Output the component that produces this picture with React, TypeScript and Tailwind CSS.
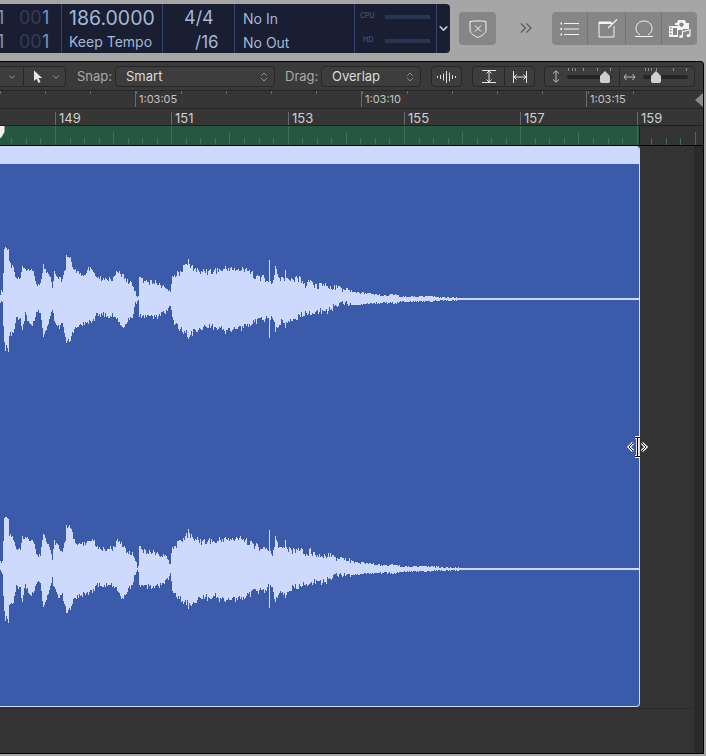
import { ChevronDown, ChevronsUpDown } from 'lucide-react';

const ui = "font-['Inter','Liberation_Sans',sans-serif]";

// waveform envelope: [x, px above centre, px below centre]
const envelope: number[][] = [
  [0, 7, 4], [2, 8, 5], [3, 26, 26], [4, 50, 44], [8, 50, 53], [9, 36, 36], [13, 31, 34], [16, 21, 19], [20, 22, 21],
  [22, 34, 34], [25, 31, 16], [30, 31, 28], [33, 27, 24], [37, 14, 13], [40, 14, 14], [43, 35, 38], [46, 27, 31],
  [50, 21, 16], [52, 11, 11], [54, 27, 20], [58, 22, 29], [62, 18, 26], [65, 30, 38], [66, 44, 43], [70, 42, 41],
  [73, 32, 32], [76, 27, 29], [85, 25, 25], [87, 30, 24], [92, 31, 23], [96, 24, 17], [100, 21, 16], [107, 21, 17],
  [112, 21, 17], [118, 29, 22], [122, 24, 30], [128, 17, 20], [132, 16, 17], [135, 7, 5], [138, 2, 2], [139, 22, 18],
  [145, 17, 18], [155, 17, 19], [160, 14, 16], [166, 12, 13], [170, 6, 6], [172, 22, 21], [176, 25, 28], [182, 31, 33],
  [188, 37, 37], [192, 33, 36], [200, 29, 31], [215, 29, 29], [225, 32, 33], [240, 31, 31], [250, 28, 26], [255, 24, 24],
  [265, 22, 22], [272, 16, 18], [275, 31, 33], [280, 22, 24], [285, 22, 26], [290, 19, 21], [300, 22, 19], [305, 14, 16],
  [310, 20, 16], [315, 14, 14], [325, 16, 14], [335, 12, 9], [345, 11, 6], [355, 7, 6], [370, 6, 5], [385, 4, 4],
  [395, 5, 5], [400, 3, 3], [415, 3, 3], [430, 3, 3], [440, 2, 2], [450, 2, 2], [459, 2, 2],
];

const spikes: Record<number, number> = { 269: 39, 66: 44, 188: 40, 5: 52, 275: 33, 285: 29 };

function lerp(x: number, col: number) {
  for (let i = 0; i < envelope.length - 1; i++) {
    const a = envelope[i];
    const b = envelope[i + 1];
    if (x >= a[0] && x <= b[0]) return a[col] + ((b[col] - a[col]) * (x - a[0])) / (b[0] - a[0] || 1);
  }
  return 1;
}

function wavePath(seed: number) {
  let d = '';
  for (let x = 0; x < 460; x++) {
    const r1 = Math.abs(Math.sin((x + seed) * 12.9898) * 43758.5453) % 1;
    const r2 = Math.abs(Math.sin((x + seed) * 78.233) * 12543.123) % 1;
    const k = x > 350 ? 2 : x > 175 ? 7 : 5;
    const up = spikes[x] ?? lerp(x, 1) - r1 * k + (x > 350 ? 0.5 : 2);
    const down = spikes[x] ?? lerp(x, 2) - r2 * k + (x > 350 ? 0.5 : 2);
    d += `M${x + 0.5} ${(70 - Math.max(up, 1)).toFixed(0)}V${(70 + Math.max(down, 1)).toFixed(0)}`;
  }
  return d;
}

const Waveform = ({ seed }: { seed: number }) => (
  <svg width="639" height="140" className="block" shapeRendering="crispEdges">
    <path d={wavePath(seed)} stroke="#cdd9fd" strokeWidth="1" fill="none" />
    <rect x="459" y="69" width="180" height="2" fill="#cdd9fd" />
  </svg>
);

const Counter = () => (
  <div className="flex h-[22px] items-center whitespace-nowrap">
    <span className="-ml-[3px] w-[22px] text-[#7f94b3]">1</span>
    <span className="w-[23px] text-[#343c54]">00</span>
    <span className="text-[#7f94b3]">1</span>
  </div>
);

const Lcd = () => (
  <div className={`flex h-[49px] w-[450px] rounded-r-[4px] bg-[#191e33] text-[#a4b8d4] ${ui}`}>
    <div className="flex h-full w-[62px] flex-col gap-[2px] overflow-hidden border-r border-[#33456e] pt-[2px] text-[18px]">
      <Counter />
      <Counter />
    </div>
    <div className="flex w-[101px] flex-col items-start border-r border-[#33456e] pl-[7px]">
      <div className="h-[27px] pt-[1px] text-[19.5px] leading-[26px]">186.0000</div>
      <div className="pt-[1px] text-[14px] leading-[20px]">Keep Tempo</div>
    </div>
    <div className="relative w-[72px] border-r border-[#33456e] text-[18px]">
      <div className="pl-[21px] leading-[28px]">4/4</div>
      <div className="pl-[32px] text-[17px] leading-[20px]">/16</div>
    </div>
    <div className="flex w-[120px] flex-col border-r border-[#33456e] pl-[8px] pt-[3px] text-[14px]">
      <div className="leading-[23px]">No In</div>
      <div className="leading-[25px]">No Out</div>
    </div>
    <div className="flex w-[82px] flex-col gap-[15px] border-r border-[#33456e] pl-[5px] pt-[8px] text-[7px] text-[#4d6390]">
      <div className="flex h-[9px] items-center gap-[7px]"><span className="w-[18px]">CPU</span><span className="h-[4px] w-[45px] bg-[#2a3553]" /></div>
      <div className="flex h-[9px] items-center gap-[7px]"><span className="w-[18px] pl-[3px]">HD</span><span className="h-[4px] w-[45px] bg-[#2a3553]" /></div>
    </div>
    <div className="flex flex-1 items-center justify-center">
      <ChevronDown size={13} strokeWidth={3} className="text-[#b8c6dc]" />
    </div>
  </div>
);

const TopBar = () => (
  <div className="flex h-[61px] items-start bg-[#a6a6a6] pt-[4px]">
    <Lcd />
    <div className="ml-[9px] mt-[8px] flex h-[33px] w-[37px] items-center justify-center rounded-[4px] bg-[#868686]">
      <svg width="18" height="18" viewBox="0 0 18 18" fill="none" stroke="#f2f2f2" strokeWidth="1">
        <path d="M1 1.5C6 0.7 12 0.7 17 1.5V10C17 13.5 12.5 16 9 17.5C5.5 16 1 13.5 1 10Z" />
        <path d="M6 5.5L12 11.5M12 5.5L6 11.5" />
      </svg>
    </div>
    <svg width="12" height="10" viewBox="0 0 12 10" fill="none" stroke="#555" strokeWidth="1.1" className="ml-[24px] mt-[19px]">
      <path d="M1 0.5L5.5 5L1 9.5M6.5 0.5L11 5L6.5 9.5" />
    </svg>
    <div className="ml-[20px] mt-[8px] flex h-[33px] w-[145px] divide-x divide-[#757575] rounded-[4px] bg-[#868686]">
      <div className="flex flex-1 items-center justify-center">
        <svg width="20" height="16" viewBox="0 0 20 16" fill="none" stroke="#f4f4f4" strokeWidth="1">
          <path d="M4 2.5H19M4 8H19M4 13.5H19" />
          <path d="M0.5 2.5H2M0.5 8H2M0.5 13.5H2" strokeWidth="2" />
        </svg>
      </div>
      <div className="flex flex-1 items-center justify-center pl-[2px]">
        <svg width="20" height="19" viewBox="0 0 20 19" fill="none" stroke="#f4f4f4" strokeWidth="1">
          <path d="M16 7V18H1V3H13" />
          <path d="M1 3H14V5H1Z" fill="#f4f4f4" strokeWidth="0" />
          <path d="M10 9L19 0.5" strokeWidth="1.3" />
        </svg>
      </div>
      <div className="flex flex-1 items-center justify-center">
        <svg width="20" height="18" viewBox="0 0 20 18" fill="none" stroke="#f4f4f4" strokeWidth="1">
          <path d="M6 15C3 13 2 10.5 2 8.5C2 4 5.5 1 10 1C14.5 1 18 4 18 8.5C18 10.5 17 13 14 15" />
          <path d="M1 16.5H19" />
        </svg>
      </div>
      <div className="flex flex-1 items-center justify-center">
        <svg width="22" height="21" viewBox="0 0 22 21" fill="#f4f4f4">
          <path fillRule="evenodd" d="M6 5H8L9 2H16L17 5H20V11H14V12H9V7H6ZM12.5 4.5A2.2 2.2 0 1 0 12.51 4.5Z" />
          <path fillRule="evenodd" d="M0 8H9V19H0ZM1 9V10.5H2.5V9ZM1 12V13.5H2.5V12ZM1 15V16.5H2.5V15ZM4 10V17H8V10Z" />
          <path fill="none" stroke="#f4f4f4" strokeWidth="1.2" d="M13.5 18V13.5L21 12V17" />
          <ellipse cx="12" cy="18.5" rx="2" ry="1.5" />
          <ellipse cx="19.5" cy="17.5" rx="2" ry="1.5" />
        </svg>
      </div>
    </div>
  </div>
);

const Field = ({ label, width }: { label: string; width: string }) => (
  <div className={`flex h-[21px] items-center justify-between rounded-[4px] border border-[#272727] bg-[#3d3d3d] pl-[10px] pr-[4px] text-[13px] text-[#dcdcdc] ${width}`}>
    {label}
    <ChevronsUpDown size={12} strokeWidth={1.2} className="text-[#c4c4c4]" />
  </div>
);

const Slider = ({ thumb, ticks }: { thumb: string; ticks: string }) => (
  <div className="relative ml-[7px] flex h-[12px] w-[45px] items-center rounded-full">
    <svg width="45" height="3" className="absolute -top-[3px] left-0" stroke="#8c8c8c" strokeWidth="1">
      <path d={ticks} />
    </svg>
    <div className="absolute inset-x-0 top-[4px] h-[4px] rounded-full bg-[#252525]" />
    <svg width="10" height="12" viewBox="0 0 10 12" fill="#cfcfcf" className={`relative ${thumb}`}>
      <path d="M5 0L10 5V10.5L9 12H1L0 10.5V5Z" />
    </svg>
  </div>
);

const Toolbar = () => (
  <div className={`flex h-[29px] items-center border-b border-[#262626] bg-[#3a3a3a] pt-[1px] text-[13px] text-[#a9a9a9] ${ui}`}>
    <div className="-ml-[2px] flex h-[21px] w-[68px] divide-x divide-[#272727] rounded-[4px] border border-[#272727] bg-[#3d3d3d]">
      <div className="flex w-[25px] items-center justify-end pr-[6px]">
        <ChevronDown size={10} className="text-[#a5a5a5]" />
      </div>
      <div className="flex flex-1 items-center justify-between pl-[9px] pr-[4px]">
        <svg width="10" height="14" viewBox="0 0 10 14" fill="#e6e6e6">
          <path d="M1 0.5V11L3.5 8.8L5.5 13L7.5 12L5.6 8H9.2Z" />
        </svg>
        <ChevronDown size={10} className="text-[#a5a5a5]" />
      </div>
    </div>
    <span className="ml-[11px] w-[38px]">Snap:</span>
    <Field label="Smart" width="w-[160px]" />
    <span className="ml-[10px] w-[36px]">Drag:</span>
    <Field label="Overlap" width="w-[100px]" />
    <div className="ml-[10px] flex h-[21px] w-[31px] items-center justify-center rounded-[4px] border border-[#272727] bg-[#3d3d3d]">
      <svg width="22" height="12" viewBox="0 0 22 12" stroke="#dcdcdc" strokeWidth="1">
        <path d="M1.5 5V7M4.5 4V8M7.5 2.5V9.5M10.5 0V12M13.5 1.5V10.5M16.5 4V8M19.5 5V7" />
      </svg>
    </div>
    <div className="ml-[10px] flex h-[21px] w-[63px] divide-x divide-[#272727] rounded-[4px] border border-[#272727] bg-[#3d3d3d]">
      <div className="flex w-[32px] items-center justify-center">
        <svg width="14" height="13" viewBox="0 0 14 13" fill="none" stroke="#e2e2e2" strokeWidth="1">
          <path d="M0 0.5H14M0 12.5H14M7 1V12M4.5 3.5L7 1L9.5 3.5M4.5 9.5L7 12L9.5 9.5" />
        </svg>
      </div>
      <div className="flex flex-1 items-center justify-center">
        <svg width="14" height="12" viewBox="0 0 14 12" fill="none" stroke="#e2e2e2" strokeWidth="1">
          <path d="M0.5 0V12M13.5 0V12M1 6H13M3.5 3.5L1 6L3.5 8.5M10.5 3.5L13 6L10.5 8.5" />
        </svg>
      </div>
    </div>
    <div className="ml-[9px] flex h-[21px] w-[151px] divide-x divide-[#272727] rounded-[4px] border border-[#272727] bg-[#3d3d3d]">
      <div className="flex w-[75px] items-center pl-[7px]">
        <svg width="8" height="13" viewBox="0 0 8 13" fill="none" stroke="#bdbdbd" strokeWidth="1">
          <path d="M4 1V12M1 3.5L4 0.8L7 3.5M1 9.5L4 12.2L7 9.5" />
        </svg>
        <Slider thumb="ml-[33px]" ticks="M1.5 0V3M5.5 0V3M8.5 0V3M16.5 0V3M30.5 0V3M43.5 0V3" />
      </div>
      <div className="flex flex-1 items-center pl-[3px]">
        <svg width="13" height="8" viewBox="0 0 13 8" fill="none" stroke="#bdbdbd" strokeWidth="1">
          <path d="M1 4H12M3.5 1L1 4L3.5 7M9.5 1L12 4L9.5 7" />
        </svg>
        <Slider thumb="ml-[8px]" ticks="M2.5 0V3M5.5 0V3M8.5 0V3M13.5 0V3M30.5 0V3M43.5 0V3" />
      </div>
    </div>
  </div>
);

const timeLabels = [
  { x: 135, label: '1:03:05' },
  { x: 361, label: '1:03:10' },
  { x: 586, label: '1:03:15' },
];
const barLabels = [
  { x: 55, label: '149' },
  { x: 171, label: '151' },
  { x: 288, label: '153' },
  { x: 404, label: '155' },
  { x: 520, label: '157' },
  { x: 637, label: '159' },
];

const TimeRuler = () => (
  <div className={`relative h-[18px] overflow-hidden border-b border-[#262626] bg-[#363636] text-[11px] text-[#c4c4c4] ${ui}`}>
    {Array.from({ length: 15 }, (_, i) => (
      <span key={i} className="absolute top-0 h-[3px] w-px bg-[#6a6a6a]" style={{ left: i * 45.2 }} />
    ))}
    {timeLabels.map((t) => (
      <span key={t.x} className="absolute top-0 h-[16px] border-l border-[#6a6a6a] pl-[3px] leading-[17px]" style={{ left: t.x }}>
        {t.label}
      </span>
    ))}
    <span className="absolute right-0 top-[2px] h-0 w-0 border-y-[7px] border-r-[8px] border-y-transparent border-r-[#8a8a8a]" />
  </div>
);

const BarRuler = () => (
  <div className={`relative h-[17px] overflow-hidden border-b border-[#1f1f1f] bg-[#363636] text-[13px] text-[#cfcfcf] ${ui}`}>
    {barLabels.map((b) => (
      <span key={b.x} className="absolute top-[3px] h-[14px] border-l border-[#6a6a6a] pl-[3px] leading-[12px]" style={{ left: b.x }}>
        {b.label}
      </span>
    ))}
  </div>
);

const GreenRuler = () => (
  <div className="relative h-[20px] overflow-hidden border-b border-black bg-[#333333]">
    <div className="h-full w-[640px] border-r border-[#1f1f1f] bg-[#27583f]" />
    {Array.from({ length: 50 }, (_, i) => (
      <span
        key={i}
        className={`absolute bottom-0 w-px ${i % 8 === 4 ? 'h-[19px] bg-[#3f6f58]' : i % 4 === 0 ? 'h-[13px] bg-[#3f6f58]' : 'h-[7px] bg-[#3f6f58]'}`}
        style={{ left: 55 + (i - 4) * 14.54 }}
      />
    ))}
    <svg width="5" height="12" viewBox="0 0 5 12" fill="#f0f0f0" className="absolute left-0 top-0">
      <path d="M0 0H4.5V6L1 12H0Z" />
    </svg>
  </div>
);

const Region = () => (
  <div className="flex h-[561px] w-[640px] flex-col overflow-hidden rounded-r-[4px] border-r border-b border-[#cdd9fd] bg-[#3c5aaa]">
    <div className="h-[18px] shrink-0 bg-[#cdd9fd]" />
    <div className="mt-[65px]"><Waveform seed={1} /></div>
    <div className="mt-[130px]"><Waveform seed={7} /></div>
  </div>
);

export default function App() {
  return (
    <div className="relative flex h-[756px] w-[706px] flex-col overflow-hidden bg-[#a6a6a6]">
      <TopBar />
      <div className="flex h-[693px] w-[704px] flex-col overflow-hidden rounded-tr-[4px] border border-l-0 border-black bg-[#333333]">
        <Toolbar />
        <TimeRuler />
        <BarRuler />
        <GreenRuler />
        <div className="flex flex-1">
          <div className="flex flex-1 flex-col">
            <Region />
            <div className="mt-[1px] flex-1 border-t border-[#2a2a2a]" />
          </div>
          <div className="w-[9px] bg-[#2a2a2a]" />
        </div>
      </div>
      {/* resize cursor over the region edge */}
      <svg width="22" height="22" viewBox="0 0 22 22" className="absolute left-[627px] top-[436px]">
        <path d="M8 1.5H13M8 20.5H13M10.5 2V20" fill="none" stroke="#fff" strokeWidth="3" />
        <path d="M8 1.5H13M8 20.5H13M10.5 2V20" fill="none" stroke="#000" strokeWidth="1.2" />
        <path d="M6 7L2 11L6 15M15 7L19 11L15 15" fill="none" stroke="#fff" strokeWidth="3" />
        <path d="M6 7L2 11L6 15M15 7L19 11L15 15" fill="none" stroke="#222" strokeWidth="1" />
      </svg>
    </div>
  );
}
